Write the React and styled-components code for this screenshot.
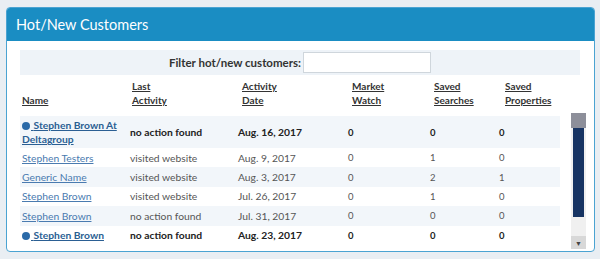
import styled, { createGlobalStyle } from "styled-components";

const GlobalStyle = createGlobalStyle`
  body {
    margin: 0;
    background: #e9eef3;
    font-family: "Lato", "Liberation Sans", sans-serif;
  }
`;

const Page = styled.div`
  padding: 7px 5px 0 6px;
`;

const Card = styled.div`
  width: 587px;
  height: 243px;
  background: #fff;
  border: 1px solid #4aa3d2;
  border-radius: 4px;
  overflow: hidden;
`;

const CardHeader = styled.div`
  height: 33px;
  background: #1a8dc3;
  color: #fff;
  font-size: 14.5px;
  display: flex;
  align-items: center;
  padding-left: 9px;
`;

const CardBody = styled.div`
  padding: 9px 8px 0 13px;
`;

const FilterBar = styled.div`
  width: 560px;
  height: 25px;
  background: #eef3f8;
  display: flex;
  align-items: center;
  justify-content: center;
  gap: 1px;
  font-size: 11.5px;
  font-weight: bold;
  color: #333;
`;

const FilterInput = styled.input`
  width: 128px;
  height: 21px;
  box-sizing: border-box;
  border: 1px solid #cfd6dc;
  background: #fff;
  margin-left: 1px;
`;

const HeadRow = styled.div`
  display: grid;
  grid-template-columns: 110px 110px 110px 82px 71px 60px;
  align-items: end;
  height: 39px;
  padding-left: 2px;
`;

const HeadCell = styled.a`
  font-size: 10px;
  font-weight: bold;
  line-height: 14px;
  color: #333;
  text-decoration: underline;
  padding-bottom: 7px;
`;

const Scroller = styled.div`
  display: flex;
  gap: 11px;
`;

const Table = styled.div`
  width: 540px;
  padding-top: 2px;
`;

const Row = styled.div`
  display: grid;
  grid-template-columns: 108px 108px 110px 82px 69px 55px;
  align-items: center;
  height: ${(p) => (p.$tall ? 32 : 19.4)}px;
  padding-left: 2px;
  background: ${(p) => (p.$alt ? "#f2f6fa" : "#fff")};
  font-size: 10.3px;
  font-weight: ${(p) => (p.$hot ? "bold" : "normal")};
  color: ${(p) => (p.$hot ? "#222" : "#555")};
`;

const NameCell = styled.div`
  padding-right: 6px;
  line-height: 14px;
`;

const NameLink = styled.a`
  color: ${(p) => (p.$hot ? "#2b5f93" : "#4a7bb0")};
  text-decoration: underline;
`;

const Dot = styled.span`
  display: inline-block;
  width: 8px;
  height: 8px;
  border-radius: 50%;
  background: #2b6aa8;
  margin-right: 1px;
  vertical-align: -1px;
`;

const Num = styled.span`
  font-size: 9.5px;
`;

const ScrollBar = styled.div`
  width: 15px;
  height: 136px;
  margin-top: -1px;
  display: flex;
  flex-direction: column;
  background: #f0f0f0;
`;

const UpButton = styled.div`
  height: 15px;
  background: #8d8f9a;
`;

const Thumb = styled.div`
  height: 89px;
  margin: 0 2px;
  background: #173463;
`;

const Track = styled.div`
  flex: 1;
`;

const DownButton = styled.div`
  height: 13px;
  background: #d8d8d8;
  display: flex;
  align-items: center;
  justify-content: center;
  font-size: 7px;
  color: #444;
`;

const rows = [
  { name: "Stephen Brown At Deltagroup", act: "no action found", date: "Aug. 16, 2017", mw: 0, ss: 0, sp: 0, hot: true },
  { name: "Stephen Testers", act: "visited website", date: "Aug. 9, 2017", mw: 0, ss: 1, sp: 0 },
  { name: "Generic Name", act: "visited website", date: "Aug. 3, 2017", mw: 0, ss: 2, sp: 1 },
  { name: "Stephen Brown", act: "visited website", date: "Jul. 26, 2017", mw: 0, ss: 1, sp: 0 },
  { name: "Stephen Brown", act: "no action found", date: "Jul. 31, 2017", mw: 0, ss: 0, sp: 0 },
  { name: "Stephen Brown", act: "no action found", date: "Aug. 23, 2017", mw: 0, ss: 0, sp: 0, hot: true },
];

const App = () => {
  return (
    <Page>
      <GlobalStyle />
      <Card>
        <CardHeader>Hot/New Customers</CardHeader>
        <CardBody>
          <FilterBar>
            Filter hot/new customers:
            <FilterInput type="text" />
          </FilterBar>
          <HeadRow>
            <HeadCell>Name</HeadCell>
            <HeadCell>Last<br />Activity</HeadCell>
            <HeadCell>Activity<br />Date</HeadCell>
            <HeadCell>Market<br />Watch</HeadCell>
            <HeadCell>Saved<br />Searches</HeadCell>
            <HeadCell>Saved<br />Properties</HeadCell>
          </HeadRow>
          <Scroller>
            <Table>
              {rows.map((r, i) => (
                <Row key={i} $alt={i % 2 === 0} $hot={r.hot} $tall={i === 0}>
                  <NameCell>
                    {r.hot && <Dot />}
                    <NameLink $hot={r.hot}>
                      {r.hot && " "}
                      {r.name}
                    </NameLink>
                  </NameCell>
                  <span>{r.act}</span>
                  <span>{r.date}</span>
                  <Num>{r.mw}</Num>
                  <Num>{r.ss}</Num>
                  <Num>{r.sp}</Num>
                </Row>
              ))}
            </Table>
            <ScrollBar>
              <UpButton />
              <Thumb />
              <Track />
              <DownButton>▼</DownButton>
            </ScrollBar>
          </Scroller>
        </CardBody>
      </Card>
    </Page>
  );
};

export default App;
